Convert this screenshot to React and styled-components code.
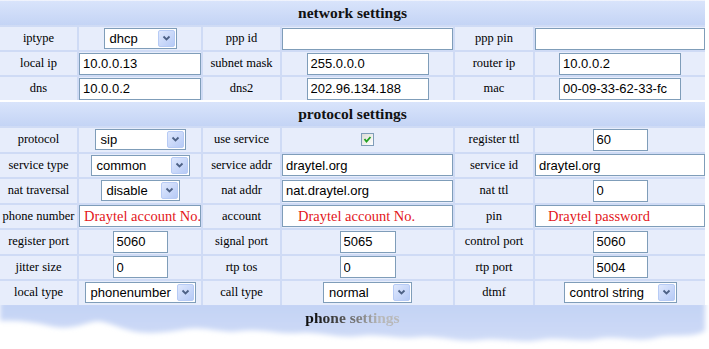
import React from 'react';
import styled, { createGlobalStyle } from 'styled-components';

const Global = createGlobalStyle`
  body {
    margin: 0;
    background: #fff;
  }
`;

const Page = styled.div`
  width: 705px;
  padding-top: 1px;
  background: linear-gradient(#eef2fc, #fff 8px);
`;

const Table = styled.div`
  display: grid;
  grid-template-columns: 77px 122px 77px 171px 78px 170px;
  grid-template-rows: ${p => p.$rows};
  gap: 2px;
  background: #cfdbf5;
  & + & {
    margin-top: 2px;
  }
`;

const Header = styled.div`
  grid-column: 1 / -1;
  display: flex;
  align-items: center;
  justify-content: center;
  background: linear-gradient(#d9e4fb, #c4d4f5);
  font-family: "Liberation Serif", "DejaVu Serif", serif;
  font-weight: bold;
  font-size: 15.5px;
  color: #111;
`;

const Cell = styled.div`
  display: flex;
  align-items: center;
  justify-content: center;
  background: #e7edfb;
  min-width: 0;
`;

const Label = styled(Cell)`
  font-family: "Liberation Serif", "DejaVu Serif", serif;
  font-size: 12.5px;
  color: #000;
  white-space: nowrap;
`;

const TextBox = styled.input`
  box-sizing: border-box;
  width: ${p => (p.$w ? `${p.$w}px` : '100%')};
  height: 22px;
  margin: 0;
  border: 1px solid #7f9db9;
  background: #fff;
  padding: 0 0 0 ${p => p.$pad ?? 3}px;
  font-family: ${p => (p.$red ? '"Liberation Serif", "DejaVu Serif", serif' : '"Liberation Sans", Arial, sans-serif')};
  font-size: ${p => (p.$red ? 14.5 : 13)}px;
  color: ${p => (p.$red ? '#e3161b' : '#000')};
  outline: none;
`;

const Combo = styled.div`
  box-sizing: border-box;
  display: flex;
  align-items: center;
  width: ${p => p.$w}px;
  height: 21px;
  border: 1px solid #7f9db9;
  background: #fff;
  padding: 1px;
  font-family: "Liberation Sans", Arial, sans-serif;
  font-size: 13px;
  color: #000;
`;

const ComboText = styled.span`
  flex: 1;
  padding-left: 4px;
  white-space: nowrap;
  overflow: hidden;
`;

const DropBtn = styled.span`
  box-sizing: border-box;
  width: 17px;
  height: 17px;
  border: 1px solid #b7cbf5;
  border-radius: 2px;
  background: linear-gradient(135deg, #dfe8fd, #b6caf6);
  display: flex;
  align-items: center;
  justify-content: center;
`;

const Check = styled.span`
  box-sizing: border-box;
  width: 13px;
  height: 13px;
  border: 1px solid #7f9db9;
  background: linear-gradient(135deg, #dcdcd6, #fff);
  display: flex;
  align-items: center;
  justify-content: center;
`;

const Fade = styled.div`
  position: relative;
  width: 709px;
  height: 44px;
  display: flex;
  justify-content: center;
`;

const Cloud = styled.svg`
  position: absolute;
  left: 0;
  top: 0;
`;

const FadedTitle = styled.div`
  position: relative;
  margin: 4px 0 0 -4px;
  font-family: "Liberation Serif", "DejaVu Serif", serif;
  font-weight: bold;
  font-size: 15.5px;
  background: linear-gradient(100deg, #111 10%, #555 40%, #b8b8b8 75%);
  -webkit-background-clip: text;
  background-clip: text;
  color: transparent;
  -webkit-mask-image: linear-gradient(#000 55%, transparent 90%);
  mask-image: linear-gradient(#000 55%, transparent 90%);
`;

const Select = ({ w, value }) => (
  <Combo $w={w}>
    <ComboText>{value}</ComboText>
    <DropBtn>
      <svg width="9" height="7" viewBox="0 0 9 7">
        <path d="M1.5 1.5 L4.5 4.5 L7.5 1.5" fill="none" stroke="#4d6185" strokeWidth="1.8" />
      </svg>
    </DropBtn>
  </Combo>
);

const CheckBox = () => (
  <Check>
    <svg width="9" height="9" viewBox="0 0 9 9">
      <path d="M1.5 4 L3.5 6.5 L7.5 2" fill="none" stroke="#21a121" strokeWidth="1.8" />
    </svg>
  </Check>
);

const Control = ({ c }) => {
  if (c.type === 'select') return <Select w={c.w} value={c.value} />;
  if (c.type === 'check') return <CheckBox />;
  return <TextBox $w={c.w} $red={c.red} $pad={c.pad} defaultValue={c.value || ''} readOnly />;
};

const sel = (w, value) => ({ type: 'select', w, value });
const txt = (value, w) => ({ type: 'text', value, w });
const red = (value, pad) => ({ type: 'text', value, red: true, pad });

const network = [
  [['iptype', sel(73, 'dhcp')], ['ppp id', txt('')], ['ppp pin', txt('')]],
  [['local ip', txt('10.0.0.13')], ['subnet mask', txt('255.0.0.0', 122)], ['router ip', txt('10.0.0.2', 122)]],
  [['dns', txt('10.0.0.2')], ['dns2', txt('202.96.134.188', 122)], ['mac', txt('00-09-33-62-33-fc', 122)]],
];

const protocol = [
  [['protocol', sel(91, 'sip')], ['use service', { type: 'check' }], ['register ttl', txt('60', 55)]],
  [['service type', sel(99, 'common')], ['service addr', txt('draytel.org')], ['service id', txt('draytel.org')]],
  [['nat traversal', sel(79, 'disable')], ['nat addr', txt('nat.draytel.org')], ['nat ttl', txt('0', 55)]],
  [['phone number', red('Draytel account No.', 4)], ['account', red('Draytel account No.', 15)], ['pin', red('Draytel password', 12)]],
  [['register port', txt('5060', 55)], ['signal port', txt('5065', 56)], ['control port', txt('5060', 55)]],
  [['jitter size', txt('0', 55)], ['rtp tos', txt('0', 56)], ['rtp port', txt('5004', 55)]],
  [['local type', sel(111, 'phonenumber')], ['call type', sel(89, 'normal')], ['dtmf', sel(113, 'control string')]],
];

const Rows = ({ rows }) =>
  rows.map((row, i) =>
    row.map(([label, c]) => (
      <React.Fragment key={`${i}-${label}`}>
        <Label>{label}</Label>
        <Cell>
          <Control c={c} />
        </Cell>
      </React.Fragment>
    ))
  );

export default function App() {
  return (
    <>
      <Global />
      <Page>
        <Table $rows="24px repeat(3, 23px)">
          <Header>network settings</Header>
          <Rows rows={network} />
        </Table>
        <Table $rows="24px repeat(7, 23.5px)">
          <Header>protocol settings</Header>
          <Rows rows={protocol} />
        </Table>
      </Page>
      <Fade>
        <Cloud width="709" height="44" viewBox="0 0 709 44">
          <defs>
            <filter id="soft" x="-5%" y="-50%" width="110%" height="200%">
              <feGaussianBlur stdDeviation="2.6" />
            </filter>
            <linearGradient id="blue" x1="0" y1="0" x2="0" y2="1">
              <stop offset="0" stopColor="#c2d2f4" />
              <stop offset="1" stopColor="#cfdbf7" />
            </linearGradient>
          </defs>
          <path
            filter="url(#soft)"
            fill="url(#blue)"
            d="M0 -4 H705 V26 C690 34 672 28 655 33 C636 38 618 30 598 34 C578 38 560 31 540 35 C520 39 500 32 480 35 C458 38 440 30 420 32 C400 35 380 28 360 31 C340 34 318 26 300 28 C280 30 262 23 240 26 C222 29 205 21 186 24 C168 27 150 30 132 26 C114 22 104 14 92 17 C78 21 66 25 50 21 C34 17 18 15 0 16 Z"
          />
        </Cloud>
        <FadedTitle>phone settings</FadedTitle>
      </Fade>
    </>
  );
}
